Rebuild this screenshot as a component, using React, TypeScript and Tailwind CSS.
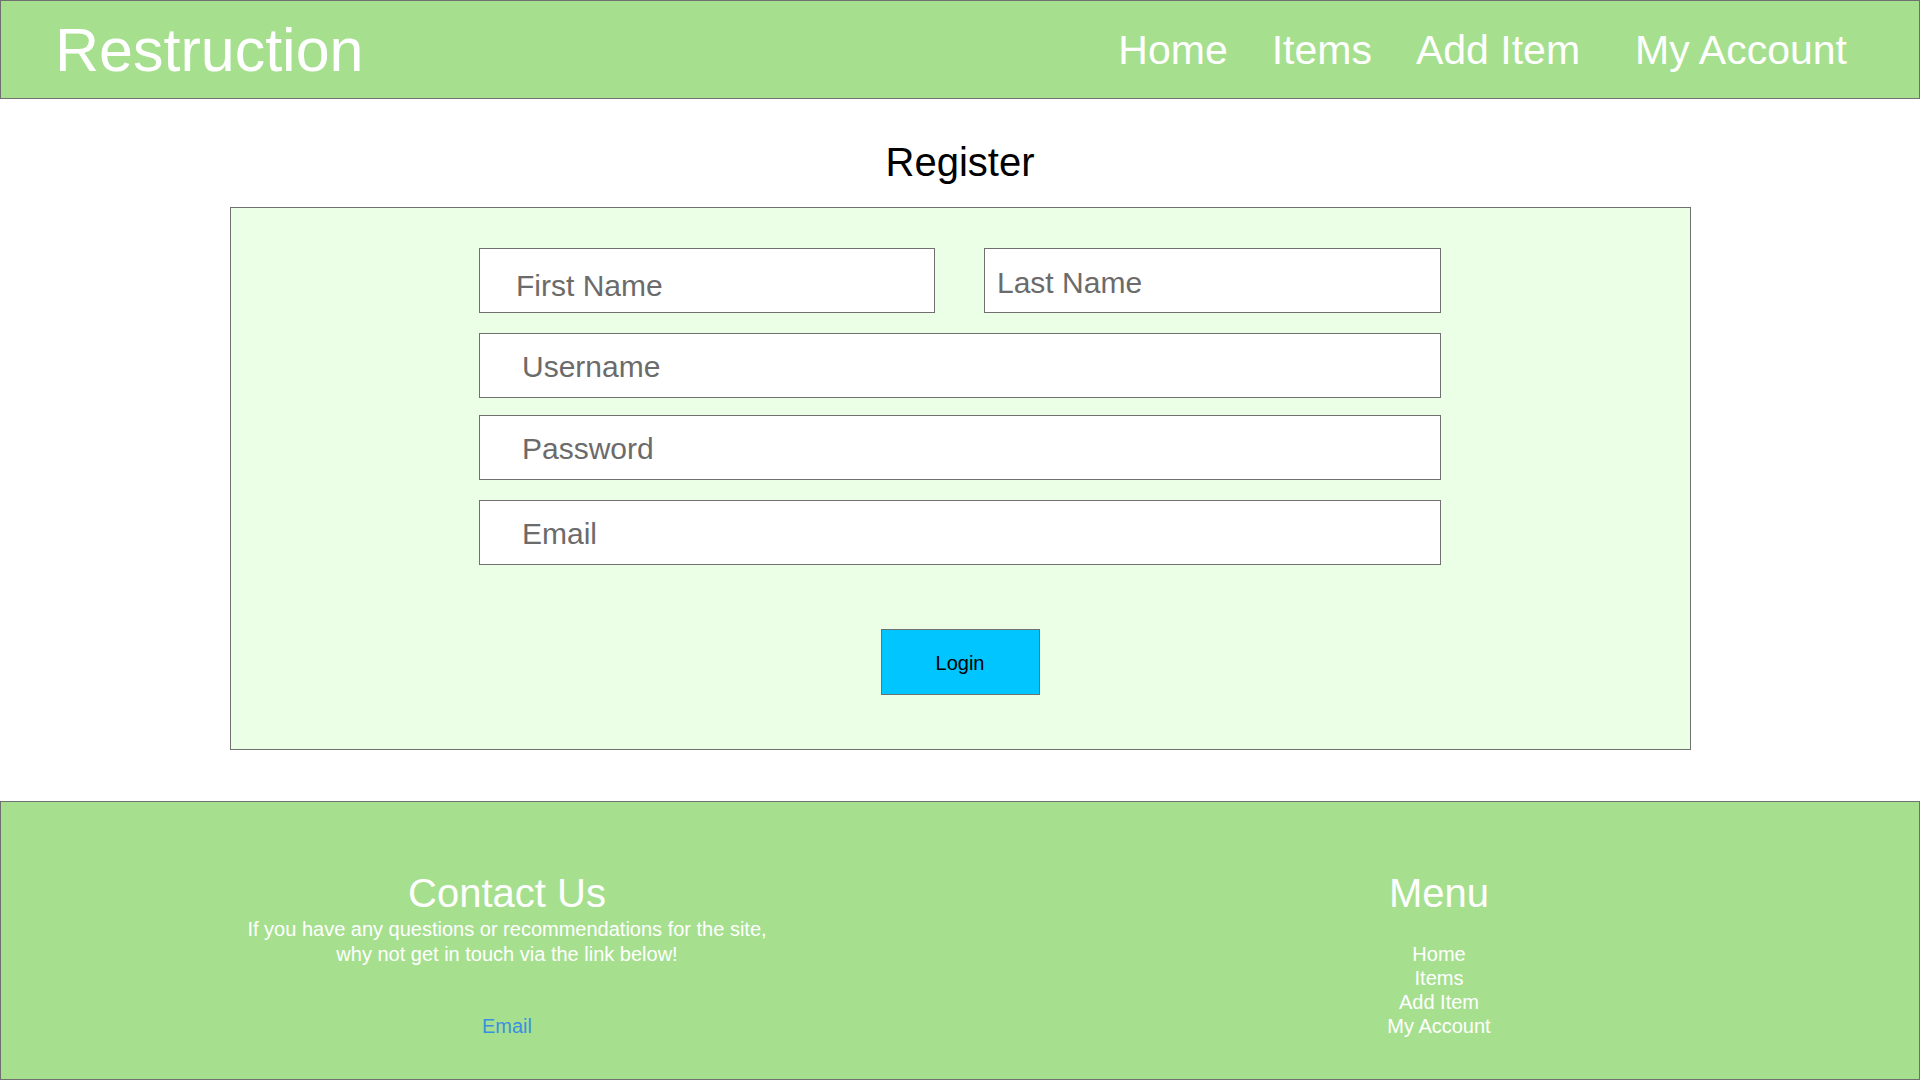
import React from 'react';

const NAV = ['Home', 'Items', 'Add Item', 'My Account'];

function Field({ label, className = '', textClass = '' }: { label: string; className?: string; textClass?: string }) {
  return (
    <div className={`h-[65px] border border-[#707070] bg-white flex items-center ${className}`}>
      <span className={`text-[30px] leading-none text-[#6b6b6b] ${textClass}`}>{label}</span>
    </div>
  );
}

export default function App() {
  return (
    <div className="w-full h-[1080px] bg-white flex flex-col font-['Liberation_Sans',Arial,sans-serif]">
      {/* Header */}
      <header className="h-[99px] shrink-0 border border-[#707070] bg-[#a6e08f] flex items-center pt-[2px] pl-[54px] pr-[72px] text-white">
        <div className="text-[61px] leading-none">Restruction</div>
        <nav className="ml-auto flex items-center text-[41px] leading-none">
          <a className="mr-[44px]">Home</a>
          <a className="mr-[44px]">Items</a>
          <a className="mr-[55px]">Add Item</a>
          <a>My Account</a>
        </nav>
      </header>

      {/* Register form */}
      <main className="flex-1 flex flex-col items-center">
        <h1 className="mt-[39px] text-[40px] leading-[48px] text-black">Register</h1>
        <div className="mt-[21px] w-[1461px] h-[543px] border border-[#707070] bg-[#ebfee6] flex flex-col items-center">
          <div className="w-[962px] pt-[40px] flex flex-col">
            <div className="flex justify-between">
              <Field label="First Name" className="w-[456px] pl-[36px]" textClass="mt-[11px]" />
              <Field label="Last Name" className="w-[457px] pl-[12px]" textClass="mt-[4px]" />
            </div>
            <Field label="Username" className="mt-[20px] pl-[42px]" textClass="mt-[2px]" />
            <Field label="Password" className="mt-[17px] pl-[42px]" textClass="mt-[2px]" />
            <Field label="Email" className="mt-[20px] pl-[42px]" textClass="mt-[2px]" />
          </div>
          <button className="mt-[64px] w-[159px] h-[66px] pt-[2px] border border-[#707070] bg-[#00c5ff] text-[20px] text-black">
            Login
          </button>
        </div>
      </main>

      {/* Footer */}
      <footer className="h-[279px] shrink-0 border border-[#707070] bg-[#a6e08f] text-white flex">
        <div className="ml-[206px] w-[600px] pt-[68px] flex flex-col items-center text-center">
          <h2 className="text-[40px] leading-[46px]">Contact Us</h2>
          <p className="mt-[1px] text-[20px] leading-[25px]">
            If you have any questions or recommendations for the site,
            <br />
            why not get in touch via the link below!
          </p>
          <a className="mt-[47px] text-[20px] leading-[24px] text-[#3b8fe0]">Email</a>
        </div>
        <div className="ml-[332px] w-[600px] pt-[68px] flex flex-col items-center">
          <h2 className="text-[40px] leading-[46px]">Menu</h2>
          <ul className="mt-[26px] flex flex-col items-center text-[20px] leading-[24px]">
            {NAV.map((n) => (
              <li key={n}>{n}</li>
            ))}
          </ul>
        </div>
      </footer>
    </div>
  );
}
